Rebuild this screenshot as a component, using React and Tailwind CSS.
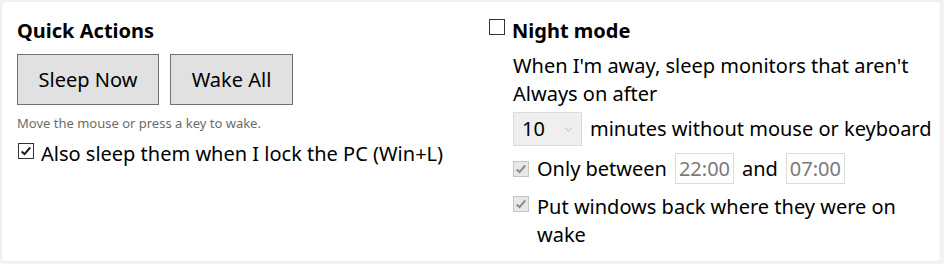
const font = { fontFamily: '"Noto Sans", "Open Sans", sans-serif' };

function Check({ checked, disabled }) {
  const box = disabled
    ? "border-[#c4c4c4] bg-[#e8e8e8]"
    : "border-[#333333] bg-white";
  return (
    <span
      className={`flex h-[16px] w-[16px] shrink-0 items-center justify-center border ${box}`}
    >
      {checked && (
        <svg viewBox="0 0 16 16" className="h-[14px] w-[14px]">
          <path
            d="M3 8.5 L6.3 11.5 L12.8 4"
            fill="none"
            stroke={disabled ? "#8a8a8a" : "#1a1a1a"}
            strokeWidth="2.2"
          />
        </svg>
      )}
    </span>
  );
}

export default function App() {
  return (
    <div
      className="h-[264px] w-[944px] bg-[#f3f3f3] p-px text-[20px] leading-[28px] text-black"
      style={font}
    >
      <div className="flex h-[261px] w-[940px] rounded-[4px] border border-[#ececec] bg-white">
        <section className="w-[470px] pl-[15px] pt-[15px]">
          <h2 className="text-[20px] font-bold leading-[28px]">Quick Actions</h2>
          <div className="mt-[9px] flex gap-[11px]">
            <button className="h-[51px] w-[142px] border border-[#707070] bg-[#e1e1e1]">
              Sleep Now
            </button>
            <button className="h-[51px] w-[123px] border border-[#707070] bg-[#e1e1e1]">
              Wake All
            </button>
          </div>
          <p className="mt-[9px] text-[13px] leading-[18px] text-[#6b6b6b]">
            Move the mouse or press a key to wake.
          </p>
          <label className="mt-[8px] flex items-start gap-[7px]">
            <span className="pt-[3px] pl-[1px]">
              <Check checked />
            </span>
            <span>Also sleep them when I lock the PC (Win+L)</span>
          </label>
        </section>

        <section className="flex-1 pl-[17px] pt-[15px]">
          <label className="flex items-start gap-[7px]">
            <span className="pt-[2px]">
              <Check />
            </span>
            <span className="font-bold">Night mode</span>
          </label>
          <div className="pl-[24px] pt-[7px]">
            <p className="w-[400px]">
              When I'm away, sleep monitors that aren't Always on after
            </p>
            <div className="mt-[4px] flex items-center gap-[8px]">
              <div className="flex h-[34px] w-[69px] items-center justify-between border border-[#dcdcdc] bg-[#efefef] pl-[8px] pr-[8px]">
                <span>10</span>
                <svg viewBox="0 0 10 6" className="h-[5px] w-[9px]">
                  <path d="M1 1 L5 5 L9 1" fill="none" stroke="#b0b0b0" strokeWidth="1" />
                </svg>
              </div>
              <span>minutes without mouse or keyboard</span>
            </div>
            <div className="mt-[7px] flex items-center gap-[8px]">
              <span>
                <Check checked disabled />
              </span>
              <span>Only between</span>
              <span className="flex h-[31px] w-[59px] items-center justify-center border border-[#dcdcdc] text-[#7a7a7a]">
                22:00
              </span>
              <span>and</span>
              <span className="flex h-[31px] w-[59px] items-center justify-center border border-[#dcdcdc] text-[#7a7a7a]">
                07:00
              </span>
            </div>
            <label className="mt-[9px] flex items-start gap-[8px]">
              <span className="pt-[3px]">
                <Check checked disabled />
              </span>
              <span className="w-[380px]">
                Put windows back where they were on wake
              </span>
            </label>
          </div>
        </section>
      </div>
    </div>
  );
}
